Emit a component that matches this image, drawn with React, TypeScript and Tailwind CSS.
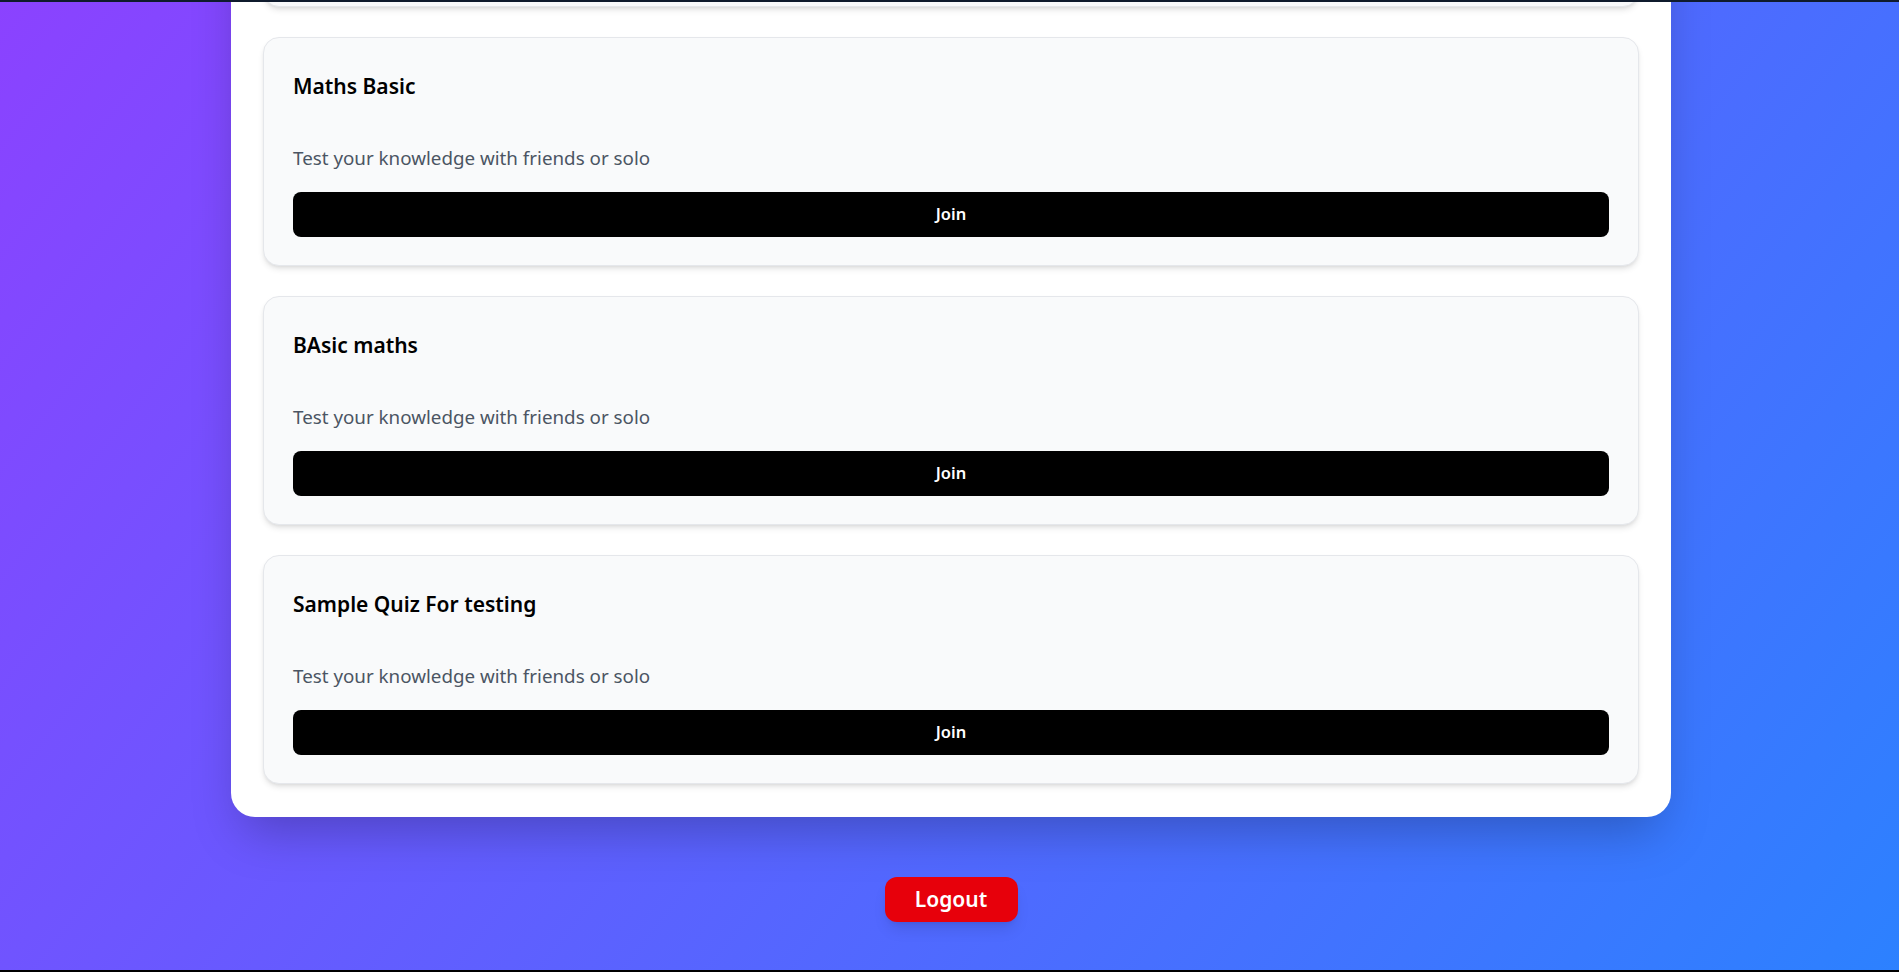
import React from "react";

const quizzes = ["Maths Basic", "BAsic maths", "Sample Quiz For testing"];

function QuizCard({ title }: { title: string }) {
  return (
    <div className="rounded-2xl border border-[#e5e7eb] bg-[#f9fafb] px-[29px] pt-[32px] pb-[28px] shadow-md">
      <h3 className="text-[21px] leading-[32px] font-semibold text-black">{title}</h3>
      <p className="mt-[41.5px] text-[18.8px] leading-[28px] text-[#4b5563]">
        Test your knowledge with friends or solo
      </p>
      <button className="mt-5 flex h-[45px] w-full items-center justify-center rounded-lg bg-black text-[16.5px] font-semibold text-white">
        Join
      </button>
    </div>
  );
}

export default function App() {
  return (
    <div
      className="relative h-[972px] w-full overflow-hidden bg-[linear-gradient(128deg,#8b42ff,#2c81ff)]"
      style={{ fontFamily: '"Noto Sans", "Open Sans", sans-serif' }}
    >
      <div className="absolute left-0 right-0 top-0 z-10 h-[2px] bg-[#0f1b2d]" />
      <div className="flex flex-col items-center pl-[3px]">
        <div className="mt-[-125.5px] w-[1440px] rounded-3xl bg-white p-8 pb-[33px] shadow-2xl">
          <div className="flex flex-col gap-[30.6px]">
            <div className="h-[100px] rounded-2xl border border-[#e5e7eb] bg-[#f9fafb] shadow-md" />
            {quizzes.map((q) => (
              <QuizCard key={q} title={q} />
            ))}
          </div>
        </div>
        <button className="mt-[60px] flex h-[45px] w-[133px] items-center justify-center rounded-xl bg-[#e7000b] text-[21px] font-semibold text-white shadow-lg">
          Logout
        </button>
      </div>
      <div className="absolute bottom-0 left-0 right-0 z-10 h-[2px] bg-black" />
    </div>
  );
}
